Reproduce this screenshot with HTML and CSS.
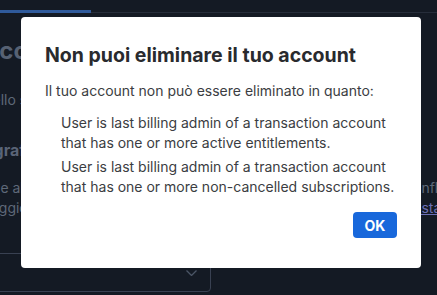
FILE: index.html
```html
<!DOCTYPE html>
<html lang="it">
<head>
<meta charset="utf-8">
<title>Account</title>
<link rel="stylesheet" href="styles.css">
</head>
<body>
<div class="page">
  <nav class="topbar">
    <span class="tab tab-active"></span>
  </nav>
  <main class="content">
    <h1 class="page-title">Account</h1>
    <p class="intro">Nello spazio di lavoro puoi gestire il tuo account.</p>
    <h3 class="section-title">Agrafia e lingua</h3>
    <div class="settings-row">
      <p class="settings-text">Due alle impostazioni del profilo<br>Raggio d'azione delle modifiche</p>
      <p class="settings-side">influenzano<br><a class="side-link" href="#">istanza</a></p>
    </div>
    <div class="select-box">
      <span class="select-value"></span>
      <svg class="chevron" width="11" height="6" viewBox="0 0 11 6"><path d="M0.5 0.5 L5.5 5.5 L10.5 0.5" fill="none" stroke="#4b5566" stroke-width="1.3"/></svg>
    </div>
  </main>
</div>

<div class="backdrop">
  <div class="dialog" role="dialog" aria-labelledby="dlg-title">
    <h2 class="dialog-title" id="dlg-title">Non puoi eliminare il tuo account</h2>
    <p class="dialog-text">Il tuo account non può essere eliminato in quanto:</p>
    <ul class="reasons">
      <li>User is last billing admin of a transaction account that has one or more active entitlements.</li>
      <li>User is last billing admin of a transaction account that has one or more non-cancelled subscriptions.</li>
    </ul>
    <div class="dialog-footer">
      <button class="btn-primary" type="button">OK</button>
    </div>
  </div>
</div>
</body>
</html>
```

FILE: styles.css
```css
* { box-sizing: border-box; }

html, body {
  margin: 0;
  height: 295px;
  overflow: hidden;
}

body {
  background: #141a24;
  font-family: Inter, "Noto Sans", sans-serif;
}

.topbar {
  height: 13px;
  border-bottom: 1px solid #262d3a;
  display: flex;
}

.tab-active {
  width: 91px;
  height: 13px;
  border-bottom: 3px solid #2f5a9b;
}

.content {
  margin-left: -18px;
  width: 520px;
  padding-top: 22px;
  color: #5e6878;
}

.page-title {
  margin: 0;
  font-size: 24px;
  line-height: 32px;
  font-weight: 700;
  color: #566173;
}

.intro {
  margin: 23px 0 0;
  font-size: 14px;
  line-height: 20px;
}

.section-title {
  margin: 28px 0 0;
  font-size: 16px;
  line-height: 24px;
  font-weight: 700;
  color: #5a6477;
}

.settings-row {
  margin-top: 16px;
  display: grid;
  grid-template-columns: 436px auto;
}

.settings-text,
.settings-side {
  margin: 0;
  font-size: 14px;
  line-height: 20px;
  white-space: nowrap;
}

.side-link {
  color: #6c6fb5;
  text-decoration: underline;
}

.select-box {
  margin-top: 35px;
  width: 229px;
  height: 39px;
  border: 1px solid #394152;
  border-radius: 4px;
  display: flex;
  align-items: center;
  justify-content: flex-end;
  padding-right: 13px;
}

.backdrop {
  position: fixed;
  inset: 0;
  display: flex;
  align-items: flex-start;
  padding: 17px 0 0 21px;
}

.dialog {
  width: 400px;
  background: #ffffff;
  border-radius: 4px;
  padding: 26px 24px 30px;
  color: #292a2e;
}

.dialog-title {
  margin: 0;
  font-size: 19.5px;
  line-height: 24px;
  font-weight: 700;
  color: #292a2e;
}

.dialog-text {
  margin: 14px 0 0;
  font-size: 14px;
  line-height: 20px;
  color: #3b3d42;
}

.reasons {
  list-style: none;
  margin: 12px 0 0;
  padding: 0 0 0 16px;
  display: flex;
  flex-direction: column;
  gap: 4px;
}

.reasons li {
  font-size: 14px;
  line-height: 20px;
  color: #3b3d42;
}

.dialog-footer {
  margin-top: 15px;
  display: flex;
  justify-content: flex-end;
}

.btn-primary {
  width: 44px;
  height: 26px;
  border: 0;
  border-radius: 4px;
  background: #1868db;
  color: #ffffff;
  font-family: Inter, "Noto Sans", sans-serif;
  font-size: 14px;
  font-weight: 700;
  padding: 0;
}
```
